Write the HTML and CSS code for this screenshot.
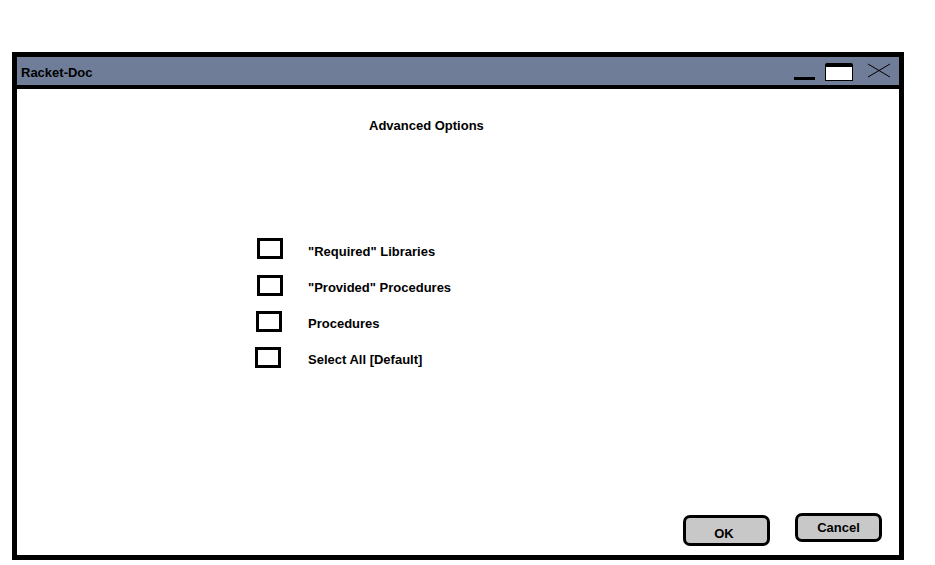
FILE: index.html
```html
<!DOCTYPE html>
<html>
<head>
<meta charset="utf-8">
<link rel="stylesheet" href="styles.css">
</head>
<body>
<div class="window">
  <div class="titlebar">
    <span class="title">Racket-Doc</span>
    <div class="controls">
      <span class="minimize"></span>
      <span class="maximize"></span>
      <svg class="close" width="24" height="15" viewBox="0 0 24 15">
        <path d="M1 1 L23 14 M23 1 L1 14" stroke="#000" stroke-width="1" fill="none"/>
      </svg>
    </div>
  </div>
  <div class="content">
    <h1 class="heading">Advanced Options</h1>
    <ul class="options">
      <li class="option"><span class="box"></span><span class="label">"Required" Libraries</span></li>
      <li class="option"><span class="box"></span><span class="label">"Provided" Procedures</span></li>
      <li class="option"><span class="box"></span><span class="label">Procedures</span></li>
      <li class="option"><span class="box"></span><span class="label">Select All [Default]</span></li>
    </ul>
    <div class="actions">
      <button class="btn btn-ok">OK</button>
      <button class="btn btn-cancel">Cancel</button>
    </div>
  </div>
</div>
</body>
</html>
```

FILE: styles.css
```css
* { box-sizing: border-box; }
html, body {
  margin: 0;
  padding: 0;
  background: #fff;
  font-family: "Liberation Sans", Arial, sans-serif;
  font-weight: bold;
  color: #000;
}
.window {
  margin: 52px 0 0 12px;
  width: 892px;
  height: 508px;
  border: 5px solid #000;
  display: flex;
  flex-direction: column;
}
.titlebar {
  height: 32px;
  background: #6f7d98;
  border-bottom: 4px solid #000;
  display: flex;
  align-items: center;
  padding-left: 4px;
}
.title {
  font-size: 13px;
  letter-spacing: 0;
  margin-top: 3px;
}
.controls {
  margin-left: auto;
  display: flex;
  align-items: flex-start;
  height: 28px;
  padding-right: 8px;
}
.minimize {
  width: 21px;
  height: 3px;
  background: #000;
  margin-top: 20px;
}
.maximize {
  width: 28px;
  height: 18px;
  margin-top: 6px;
  margin-left: 10px;
  background: #fff;
  border: 1px solid #000;
  border-top: 4px solid #000;
  border-radius: 2px 2px 0 0;
}
.close {
  margin-top: 6px;
  margin-left: 14px;
}
.content {
  flex: 1;
  display: flex;
  flex-direction: column;
}
.heading {
  font-size: 13px;
  margin: 29px 0 0 352px;
  line-height: 16px;
  letter-spacing: 0;
}
.options {
  list-style: none;
  margin: 97px 0 0 0;
  padding: 0;
}
.option {
  height: 36px;
  display: flex;
  align-items: center;
  padding-left: 240px;
}
.box {
  width: 26px;
  height: 21px;
  border: 3px solid #000;
  flex: none;
}
.label {
  font-size: 13px;
  letter-spacing: 0;
  margin-left: 25px;
  margin-top: 5px;
}
.option:nth-child(1) .box { margin-top: -1px; }
.option:nth-child(3) .box { margin-left: -1px; }
.option:nth-child(3) .label { margin-left: 26px; }
.option:nth-child(4) .box { margin-left: -2px; }
.option:nth-child(4) .label { margin-left: 27px; }
.actions {
  margin-top: auto;
  display: flex;
  align-items: flex-end;
  padding: 0 17px 9px 0;
  justify-content: flex-end;
  gap: 25px;
}
.btn {
  width: 87px;
  background: #c8c8c8;
  border: 3px solid #000;
  border-radius: 7px;
  font-family: "Liberation Sans", Arial, sans-serif;
  font-weight: bold;
  font-size: 13px;
  color: #000;
  padding: 0;
}
.btn-ok {
  height: 31px;
  padding: 6px 5px 0 0;
}
.btn-cancel {
  height: 29px;
  margin-bottom: 4px;
  padding-bottom: 0;
}
```
